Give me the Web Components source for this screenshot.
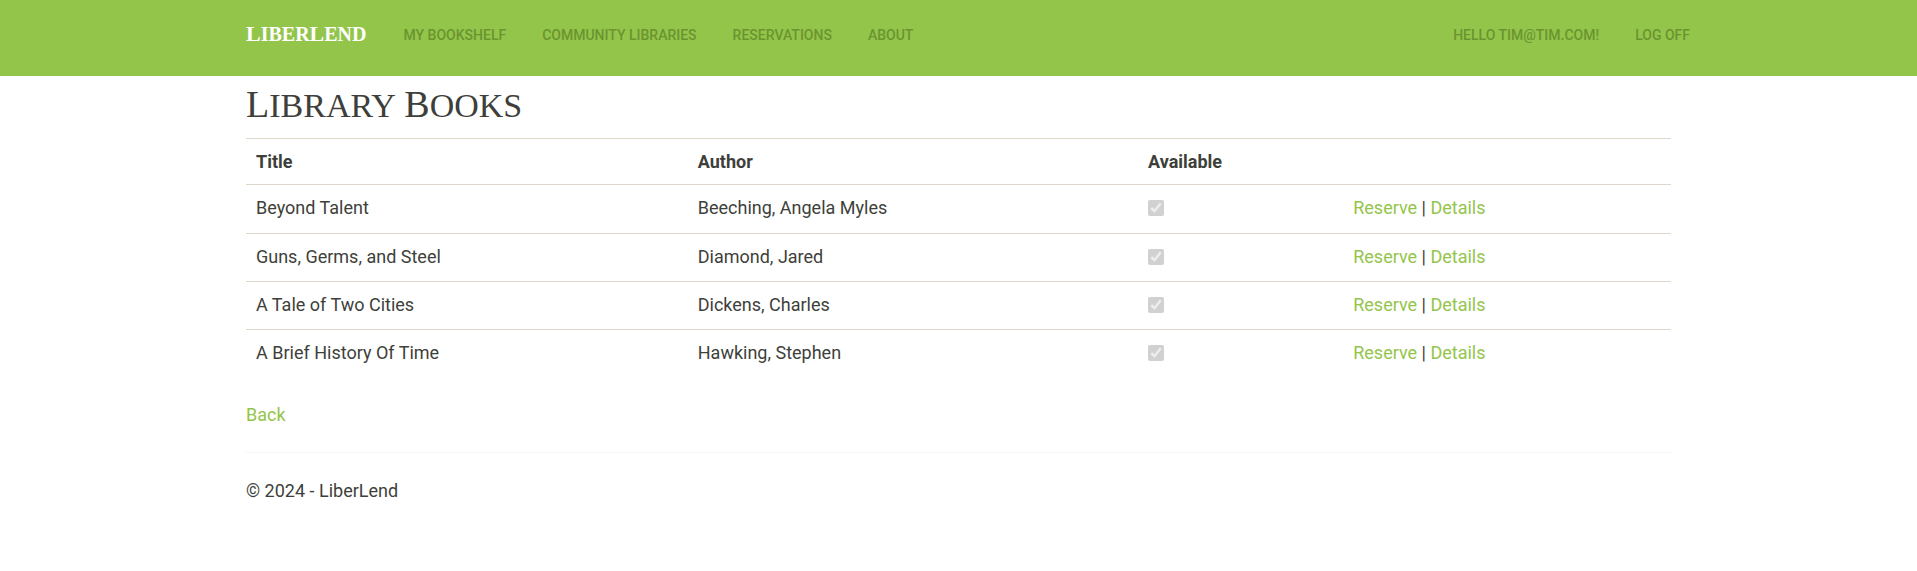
<!DOCTYPE html>
<html lang="en">
<head>
<meta charset="utf-8">
<meta name="viewport" content="width=device-width, initial-scale=1">
<title>Library Books - LiberLend</title>
<style>
  :root {
    --green: #93c54b;
    --nav-ink: #6b9430;
    --ink: #3e3f3a;
    --rule: #dfd7ca;
    --rule-soft: #f8f5f0;
    --page: 1463px;
    --gutter: 19px;
  }
  body { margin: 0; background: #fff; color: var(--ink); font: 400 18px/25px Roboto, sans-serif; }
  main { box-sizing: border-box; max-width: var(--page); margin: 0 auto; padding: 0 var(--gutter); }
</style>
</head>
<body>
<site-header>
  <nav-link href="#bookshelf">My Bookshelf</nav-link>
  <nav-link href="#libraries">Community Libraries</nav-link>
  <nav-link href="#reservations">Reservations</nav-link>
  <nav-link href="#about">About</nav-link>
  <nav-link slot="account" href="#account">Hello tim@tim.com!</nav-link>
  <nav-link slot="account" href="#logoff">Log off</nav-link>
</site-header>
<main>
  <page-title>Library Books</page-title>
  <book-table></book-table>
  <back-link href="#back">Back</back-link>
  <site-footer>© 2024 - LiberLend</site-footer>
</main>

<script>
class BaseElement extends HTMLElement {
  connectedCallback() {
    if (this.shadowRoot) return;
    this.attachShadow({ mode: 'open' }).innerHTML = this.render();
  }
}

customElements.define('nav-link', class extends BaseElement {
  render() {
    return `<style>
      :host { display: block; }
      a { display: block; padding: 25px 0 26px; color: var(--nav-ink); text-decoration: none;
          text-transform: uppercase; white-space: nowrap; font: 500 14px/20px Roboto, sans-serif; }
    </style><a href="${this.getAttribute('href')}"><slot></slot></a>`;
  }
});

customElements.define('site-header', class extends BaseElement {
  render() {
    return `<style>
      :host { display: block; background: var(--green); }
      .bar { box-sizing: border-box; max-width: var(--page); min-height: 76px; margin: 0 auto;
             padding-left: var(--gutter); display: flex; flex-wrap: wrap; align-items: flex-start; column-gap: 37px; }
      .brand { padding: 21px 0 25px; color: #fff; text-decoration: none;
               font: 700 20px/25px "Liberation Serif", serif; text-transform: uppercase; }
      .brand span { display: inline-block; }
      .brand span::first-letter { font-size: 22px; line-height: 25px; }
      nav { display: flex; flex-wrap: wrap; column-gap: 36px; }
      .account { margin-left: auto; }
    </style>
    <div class="bar">
      <a class="brand" href="#home"><span>Liber</span><span>Lend</span></a>
      <nav aria-label="Main"><slot></slot></nav>
      <nav class="account" aria-label="Account"><slot name="account"></slot></nav>
    </div>`;
  }
});

customElements.define('page-title', class extends BaseElement {
  render() {
    const words = this.textContent.trim().split(' ').map(w => `<span>${w}</span>`).join(' ');
    return `<style>
      :host { display: block; }
      h2 { margin: 0; padding: 8px 0 12px; font: 400 34px/40px "Liberation Serif", serif; text-transform: uppercase; }
      span { display: inline-block; }
      span::first-letter { font-size: 38px; line-height: 40px; }
    </style><h2>${words}</h2>`;
  }
});

customElements.define('book-table', class extends BaseElement {
  render() {
    const books = [
      ['Beyond Talent', 'Beeching, Angela Myles'],
      ['Guns, Germs, and Steel', 'Diamond, Jared'],
      ['A Tale of Two Cities', 'Dickens, Charles'],
      ['A Brief History Of Time', 'Hawking, Stephen']
    ];
    const rows = books.map(([title, author]) => `<tr>
      <td>${title}</td><td>${author}</td>
      <td><input type="checkbox" checked disabled aria-label="${title} available"></td>
      <td><a href="#reserve">Reserve</a> | <a href="#details">Details</a></td></tr>`).join('');
    return `<style>
      :host { display: block; }
      table { width: 100%; border-collapse: separate; border-spacing: 0; table-layout: fixed; }
      th, td { border-top: 1px solid var(--rule); text-align: left; vertical-align: top; }
      th { padding: 10px; font-weight: 700; }
      td { padding: 10px 10px 12px; }
      .title { width: 31%; } .author { width: 31.6%; } .available { width: 14.4%; }
      tbody tr:first-child td { padding-bottom: 13px; }
      input { display: block; width: 16px; height: 16px; margin: 5px 0 0; }
      a { color: var(--green); text-decoration: none; }
    </style>
    <table>
      <colgroup><col class="title"><col class="author"><col class="available"><col></colgroup>
      <thead><tr><th>Title</th><th>Author</th><th>Available</th><th></th></tr></thead>
      <tbody>${rows}</tbody>
    </table>`;
  }
});

customElements.define('back-link', class extends BaseElement {
  render() {
    return `<style>
      :host { display: block; padding: 25px 0; }
      a { color: var(--green); text-decoration: none; }
    </style><a href="${this.getAttribute('href')}"><slot></slot></a>`;
  }
});

customElements.define('site-footer', class extends BaseElement {
  render() {
    return `<style>
      :host { display: block; border-top: 1px solid var(--rule-soft); }
      p { margin: 0; padding: 25px 0; }
    </style><footer><p><slot></slot></p></footer>`;
  }
});
</script>
</body>
</html>
